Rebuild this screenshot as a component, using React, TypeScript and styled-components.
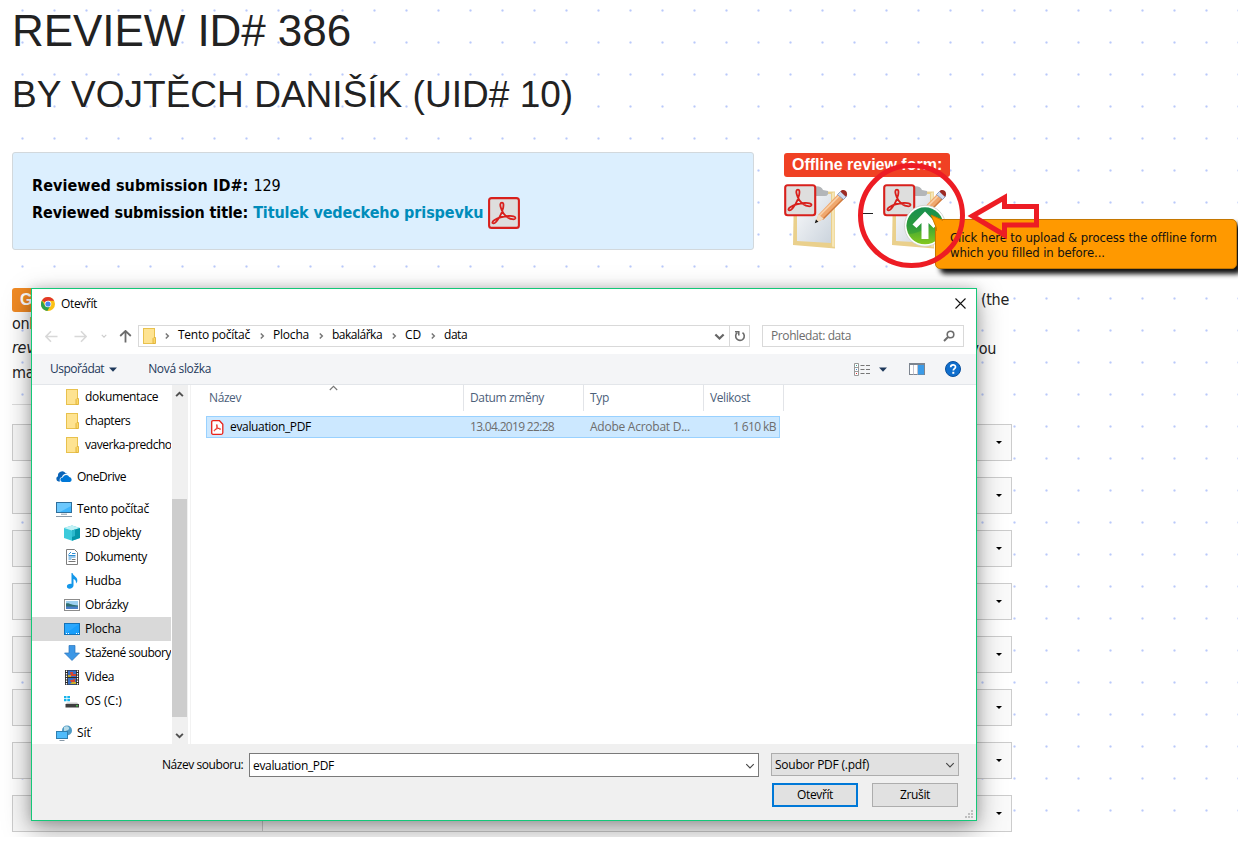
import React from "react";
import styled, { createGlobalStyle, css } from "styled-components";

const UI = '"Open Sans", "Noto Sans", sans-serif';
const BODY = '"DejaVu Sans Condensed", "DejaVu Sans", sans-serif';
const ARIAL = '"Liberation Sans", Arial, sans-serif';

const Global = createGlobalStyle`
  *, *::before, *::after { box-sizing: border-box; }
  body { margin: 0; background: #fff; overflow: hidden; }
  svg { display: block; flex: none; }
`;

/* ---------- review page ---------- */

const Page = styled.div`
  position: relative;
  width: 1238px;
  height: 837px;
  margin-bottom: 9px;
  padding: 0 0 0 12px;
  overflow: hidden;
  font-family: ${BODY};
  font-size: 16px;
  color: #222;
  background-color: #fff;
  background-image: radial-gradient(circle at 1.5px 1.5px, #b9c9fb 0, #cfdafc 0.9px, rgba(255, 255, 255, 0) 1.6px);
  background-size: 32px 32px;
  background-position: 21px 9px;
`;
const Title = styled.h1`
  margin: 0;
  padding-top: 6px;
  height: 61px;
  font: 400 44px/50px ${ARIAL};
  letter-spacing: -0.06px;
`;
const Subtitle = styled.h2`
  margin: 0;
  padding-top: 10px;
  height: 91px;
  font: 400 37px/48px ${ARIAL};
  letter-spacing: 0.02px;
`;
const Top = styled.div`
  display: flex;
  gap: 30px;
  height: 136px;
`;
const Info = styled.section`
  width: 742px;
  height: 98px;
  padding: 19px 19px;
  border: 1px solid #d2d8dc;
  border-radius: 3px;
  background: #dceffe;
  color: #000;
`;
const InfoLine = styled.div`
  display: flex;
  align-items: center;
  height: 27px;
  white-space: pre;
`;
const Strong = styled.b<{ $ls?: number }>`
  letter-spacing: ${(p) => p.$ls ?? 0}px;
`;
const Value = styled.span`
  margin-left: 5px;
  letter-spacing: -0.1px;
`;
const TitleLink = styled.b`
  margin: 0 5px 0 5px;
  color: #008cba;
  letter-spacing: -0.11px;
`;
const Forms = styled.section`
  padding-top: 1px;
`;
const Tag = styled.span<{ $color: string }>`
  display: block;
  width: max-content;
  height: 24px;
  padding: 0 8px;
  border-radius: 3px;
  background: ${(p) => p.$color};
  color: #fff;
  font: 700 16px/23px ${ARIAL};
  white-space: nowrap;
`;
const FormIcons = styled.div`
  display: flex;
  align-items: center;
  margin-top: 7px;
  height: 66px;
`;
const Dash = styled.i`
  width: 10px;
  height: 1px;
  margin: 0 10px 8px 15px;
  background: #222;
`;
const Guide = styled.div`
  display: grid;
  grid-template-columns: 60px auto;
  justify-content: space-between;
  width: 997px;
  height: 116px;
  line-height: 24.4px;
`;
const Rule = styled.div`
  width: 742px;
  height: 1px;
  background: #ddd;
`;
const GuideEnd = styled.div`
  text-align: right;
`;
const GuideLine = styled.div<{ $right?: number; $italic?: boolean }>`
  height: 24.4px;
  margin-right: ${(p) => p.$right ?? 0}px;
  font-style: ${(p) => (p.$italic ? "italic" : "normal")};
  letter-spacing: -0.3px;
`;
const Rows = styled.div`
  display: flex;
  flex-direction: column;
  gap: 16px;
  padding-top: 19px;
`;
const Criterion = styled.div`
  display: grid;
  grid-template-columns: 250px 1fr;
  width: 1000px;
  height: 37px;
  border: 1px solid #ccc;
  background: #fafafa;
`;
const CriterionName = styled.div`
  padding-right: 94px;
  border-right: 1px solid #ccc;
  background: #f7f7f7;
  text-align: right;
  font-weight: 700;
  line-height: 30px;
`;
const CriterionPick = styled.div`
  display: flex;
  align-items: center;
  justify-content: flex-end;
  padding-right: 9px;
`;
const PickArrow = styled.i`
  border: 3px solid transparent;
  border-top-color: #000;
  border-bottom: 0;
`;

/* ---------- tooltip and markings ---------- */

const Tooltip = styled.div`
  position: absolute;
  left: 935px;
  top: 219px;
  width: 302px;
  height: 50px;
  padding: 10px 14px;
  border: 1px solid #c57700;
  border-radius: 5px;
  background: #ff9900;
  box-shadow: 5px 5px 5px #111;
  color: #111;
  font: 13px/15px ${BODY};
  letter-spacing: -0.12px;
  white-space: pre;
`;
const TooltipTail = styled.svg`
  position: absolute;
  left: -6px;
  top: -6px;
`;
const Marks = styled.svg`
  position: absolute;
  left: 850px;
  top: 155px;
`;

/* ---------- file dialog ---------- */

const Dialog = styled.div`
  position: absolute;
  left: 31px;
  top: 288px;
  width: 946px;
  height: 533px;
  display: flex;
  flex-direction: column;
  border: 1px solid #14c878;
  background: #fff;
  box-shadow: 0 9px 26px rgba(0, 0, 0, 0.36), 0 0 10px rgba(0, 0, 0, 0.16);
  color: #000;
  font: 12px/16px ${UI};
  letter-spacing: -0.37px;
  white-space: nowrap;
`;
const T = styled.span<{ $ls?: number; $c?: string; $l?: number }>`
  ${(p) => p.$ls !== undefined && css`letter-spacing: ${p.$ls}px;`}
  ${(p) => p.$c && css`color: ${p.$c};`}
  margin-left: ${(p) => p.$l ?? 0}px;
  white-space: pre;
`;
const TitleBar = styled.div`
  display: flex;
  align-items: center;
  justify-content: space-between;
  height: 29px;
  padding: 0 10px 0 9px;
`;
const Group = styled.div<{ $gap?: number }>`
  display: flex;
  align-items: center;
  gap: ${(p) => p.$gap ?? 0}px;
`;
const NavBar = styled.div`
  display: flex;
  align-items: flex-start;
  height: 36px;
  padding: 7px 12px 0 13px;
`;
const Arrows = styled.div`
  display: flex;
  align-items: center;
  width: 93px;
  height: 22px;
`;
const Address = styled.div`
  display: flex;
  align-items: center;
  width: 612px;
  height: 22px;
  margin-right: 12px;
  border: 1px solid #d9d9d9;
  padding-left: 4px;
`;
const Crumb = styled.div<{ $w: number }>`
  display: flex;
  align-items: center;
  justify-content: space-between;
  width: ${(p) => p.$w}px;
  padding-right: 7px;
`;
const CrumbText = styled.div`
  height: 18px;
`;
const AddressEnd = styled.div`
  display: flex;
  align-items: center;
  height: 20px;
  margin-left: auto;
`;
const Refresh = styled.div`
  display: flex;
  align-items: center;
  justify-content: center;
  width: 20px;
  height: 20px;
  margin-left: 4px;
  border-left: 1px solid #d9d9d9;
`;
const Search = styled.div`
  display: flex;
  align-items: center;
  justify-content: space-between;
  width: 202px;
  height: 22px;
  padding: 0 8px 0 8px;
  border: 1px solid #d9d9d9;
`;
const ToolBar = styled.div`
  display: flex;
  align-items: center;
  justify-content: space-between;
  height: 31px;
  padding: 0 15px 0 18px;
  border-bottom: 1px solid #e3e6ea;
  background: #f4f5f7;
  color: #1e395b;
`;
const Body = styled.div`
  display: flex;
  height: 359px;
`;
const Tree = styled.div`
  width: 140px;
  overflow: hidden;
`;
const TreeItem = styled.div<{ $top?: boolean; $selected?: boolean; $gap?: boolean }>`
  display: flex;
  align-items: center;
  gap: 5px;
  width: 139px;
  height: 24px;
  margin-top: ${(p) => (p.$gap ? 8 : 0)}px;
  padding-left: ${(p) => (p.$top ? 24 : 32)}px;
  overflow: hidden;
  background: ${(p) => (p.$selected ? "#d9d9d9" : "transparent")};
`;
const ScrollBar = styled.div`
  display: flex;
  flex-direction: column;
  width: 16px;
  padding: 5px 0 4px;
  background: #f0f0f0;
`;
const ScrollArrow = styled.div`
  padding-left: 3px;
`;
const Thumb = styled.div`
  width: 15px;
  height: 218px;
  margin-top: 100px;
  margin-bottom: auto;
  background: #cdcdcd;
`;
const Files = styled.div`
  width: 593px;
  margin-left: 2px;
  border-left: 1px solid #f2f2f2;
`;
const Header = styled.div`
  position: relative;
  display: grid;
  grid-template-columns: 273px 120px 120px 80px;
  height: 26px;
  color: #4c607a;
`;
const HeaderCell = styled.div<{ $first?: boolean }>`
  padding: 5px 0 0 ${(p) => (p.$first ? 18 : 6)}px;
  border-right: 1px solid #e2e4e8;
`;
const SortMark = styled.svg`
  position: absolute;
  left: 138px;
  top: 0;
`;
const FileRow = styled.div`
  display: grid;
  grid-template-columns: 19px 240px 120px 120px 1fr;
  align-items: center;
  width: 574px;
  height: 22px;
  margin: 5px 0 0 15px;
  padding: 0 3px 0 4px;
  border: 1px solid #99d1ff;
  background: #cce8ff;
  color: #6d6d6d;
`;
const Size = styled.div`
  text-align: right;
  letter-spacing: -0.58px;
`;
const Footer = styled.div`
  position: relative;
  flex: 1;
  display: grid;
  grid-template-columns: 510px 188px;
  grid-template-rows: 24px 24px;
  column-gap: 12px;
  row-gap: 6px;
  padding: 9px 0 0 217px;
  background: #f0f0f0;
`;
const NameLabel = styled.div`
  position: absolute;
  left: 130px;
  top: 13px;
  letter-spacing: -0.44px;
`;
const Field = styled.div<{ $select?: boolean }>`
  display: flex;
  align-items: center;
  justify-content: space-between;
  height: ${(p) => (p.$select ? 23 : 24)}px;
  padding: ${(p) => (p.$select ? 0 : 1)}px 3px 0 3px;
  border: 1px solid ${(p) => (p.$select ? "#adadad" : "#7a7a7a")};
  background: ${(p) => (p.$select ? "#e1e1e1" : "#fff")};
`;
const Buttons = styled.div`
  grid-column: 2;
  display: flex;
  gap: 14px;
  padding-left: 1px;
`;
const Button = styled.div<{ $primary?: boolean }>`
  display: flex;
  align-items: center;
  justify-content: center;
  width: 86px;
  height: 24px;
  border: ${(p) => (p.$primary ? "2px solid #0078d7" : "1px solid #adadad")};
  background: #e1e1e1;
`;
const Grip = styled.svg`
  position: absolute;
  right: 3px;
  bottom: 2px;
`;

/* ---------- icons ---------- */

const Swoosh = ({ x = 0, y = 0 }: { x?: number; y?: number }) => (
  <g transform={`translate(${x} ${y})`} fill="none" stroke="#d8201c" strokeWidth="1.800" strokeLinejoin="round">
    <path d="M14 5.600c-2 0-2 2.400-1.200 5 1 3.600 3.600 7.800 7 10 2.600 1.700 7 2.400 7.600.7.500-1.700-3-2.500-6.600-2.300-5.600.3-11.400 2-14.600 4.200-2.200 1.500-2.300 3.400-.6 3.200 3.200-.5 8.500-9.600 9.600-15.800.5-2.900.4-5-1.200-5z" />
  </g>
);

const PdfIcon = () => (
  <svg width="32" height="32" viewBox="0 0 32 32">
    <rect x="1.100" y="1.100" width="29.800" height="29.800" rx="2.500" fill="#dededd" stroke="#d8201c" strokeWidth="2.100" />
    <Swoosh />
  </svg>
);

const FormIcon = ({ upload = false, id }: { upload?: boolean; id: string }) => (
  <svg width="64" height="66" viewBox="0 0 64 66">
    <defs>
      <linearGradient id={`${id}paper`} x1="0" y1="0" x2="1" y2="1">
        <stop offset="0" stopColor="#fbfbfc" /><stop offset="1" stopColor="#cbd4dd" />
      </linearGradient>
      <linearGradient id={`${id}green`} x1="0" y1="0" x2="0" y2="1">
        <stop offset="0" stopColor="#1c9156" /><stop offset=".5" stopColor="#3aa535" /><stop offset="1" stopColor="#86c81e" />
      </linearGradient>
    </defs>
    <path d="M10 8l41-.5v57L9 61z" fill="#ead08c" />
    <path d="M48 9l2.500-1v55l-2.500-.5z" fill="#f6e6b6" />
    <path d="M13 10h34v49l-34-2z" fill={`url(#${id}paper)`} />
    <path d="M28 3c6-2 10 0 11 3l5 1q1 5-3 5H28z" fill="#b3b6b9" />
    <path d="M31.500 38.500l3-8L55 9l6 5-21 21z" fill="#f0a86e" />
    <path d="M34.500 32.500L56.500 10.500" stroke="#f9d3ac" strokeWidth="1.600" />
    <path d="M38.500 35.500L60 14" stroke="#cf7a3e" strokeWidth="1.200" />
    <path d="M31.500 38.500l3-8 5.500 4.500z" fill="#f3dcc0" />
    <path d="M30.800 39.200l1.200-3.600 2.400 2.100z" fill="#111" />
    <path d="M53.500 10.500l3-3 6 5-3 3z" fill="#cfdcf0" stroke="#7e93bd" strokeWidth=".8" />
    <path d="M56.500 7.500c2-3 8-1 6.300 4.300l-1 1z" fill="#9c2b25" />
    <rect x="1.200" y="1.200" width="30" height="30" rx="2.500" fill="#dededd" stroke="#d8201c" strokeWidth="2.100" />
    <Swoosh />
    {upload && (
      <>
        <circle cx="42" cy="41.800" r="20.500" fill="#fff" stroke="#c9cdc9" strokeWidth=".8" />
        <circle cx="42" cy="41.800" r="18.500" fill={`url(#${id}green)`} />
        <path d="M23.500 42a18.500 18.500 0 0 1 36.500-3.500C50 37 38 50 26 50a18 18 0 0 1-2.500-8z" fill="#0d8a48" opacity=".35" />
        <path d="M42 27.500L54.500 40.500l-4 3.500-5-5v16h-7V39L33.500 44l-4-3.500z" fill="#fff" />
      </>
    )}
  </svg>
);

const Chrome = () => (
  <svg width="14" height="14" viewBox="0 0 14 14">
    <circle cx="7" cy="7" r="7" fill="#fbc116" />
    <path d="M7 7L.9 3.500A7 7 0 0 1 13.100 3.700H7z" fill="#e2382a" />
    <path d="M.9 3.500A7 7 0 0 0 6.300 14L9.500 8.500 7 10 4 8.500z" fill="#2da14c" />
    <circle cx="7" cy="7" r="3.300" fill="#fff" />
    <circle cx="7" cy="7" r="2.600" fill="#4a86ee" />
  </svg>
);

const Folder = () => (
  <svg width="13" height="16" viewBox="0 0 13 16">
    <rect x=".5" y=".5" width="11" height="15" fill="#fee391" stroke="#e8c14d" />
    <path d="M10 15.500v-5l1-1h1.500v6z" fill="#fdd866" stroke="#dfb23a" strokeWidth=".9" />
  </svg>
);

const Chevron = ({ dir = "right", color = "#666", s = 1.3, w = 8 }: { dir?: "right" | "down" | "up"; color?: string; s?: number; w?: number }) => (
  <svg width={w} height={w} viewBox="0 0 8 8">
    <path
      d={dir === "right" ? "M2.800 1.500L5.300 4 2.800 6.500" : dir === "down" ? "M1 2.500L4 5.500 7 2.500" : "M1 5.500L4 2.500 7 5.500"}
      fill="none" stroke={color} strokeWidth={s}
    />
  </svg>
);

const Arrow = ({ turn, color, s = 1.6 }: { turn: number; color: string; s?: number }) => (
  <svg width="13" height="13" viewBox="0 0 13 13">
    <path d="M12.500 6.500H1M6 1.200L.9 6.500 6 11.800" fill="none" stroke={color} strokeWidth={s} transform={`rotate(${turn} 6.500 6.500)`} />
  </svg>
);

const Caret = () => (
  <svg width="8" height="5" viewBox="0 0 8 5"><path d="M0 .5h8L4 4.800z" fill="#1e395b" /></svg>
);

const Icon = ({ children }: { children: React.ReactNode }) => (
  <svg width="16" height="16" viewBox="0 0 16 16">{children}</svg>
);

const icons = {
  folder: <Icon><g transform="translate(2 0)"><rect x=".5" y=".5" width="11" height="15" fill="#fee391" stroke="#e8c14d" /><path d="M10 15.500v-5l1-1h1.500v6z" fill="#fdd866" stroke="#dfb23a" strokeWidth=".9" /></g></Icon>,
  onedrive: <Icon><path d="M2.500 12.500A2.800 2.800 0 0 1 2 7.200 4.200 4.200 0 0 1 9.500 4a4 4 0 0 1 2 .6C8.500 4.500 6.500 6 6 8c-2 .3-3 2.500-2 4.500z" fill="#0a64b8" /><path d="M6.500 13a2.300 2.300 0 0 1 .3-4.600 3.500 3.500 0 0 1 6.500-.4A2.600 2.600 0 0 1 14 13z" fill="#0078d7" /></Icon>,
  pc: <Icon><rect x=".5" y="1.500" width="15" height="10" fill="#3fb4fb" stroke="#2f6f9c" /><path d="M1 2h14v3L4 11H1z" fill="#6cc8fd" /><path d="M5 13.200h6M0 15.500h16" stroke="#8a9aa8" strokeWidth="1" /></Icon>,
  cube: <Icon><path d="M0 3l8-2.500L16 3v10l-8 2.800L0 13z" fill="#3ccadb" /><path d="M0 3l8-2.500L16 3 8 5.500z" fill="#c2f1f5" /><path d="M8 5.500L16 3v10l-8 2.800z" fill="#0596a8" /><path d="M8 5.500l3-1V11l-3 1z" fill="#2bb9cc" /></Icon>,
  doc: <Icon><path d="M2.500.5h8l3 3v12h-11z" fill="#fff" stroke="#7e7e7e" /><path d="M4.500 5.500L7 3M4.500 8h7M4.500 10h3M8 4.500h3.500M4.500 6.500h7" stroke="#2e8fd5" /><path d="M8 10.500h3.500M4.500 12.500h7" stroke="#777" /></Icon>,
  music: <Icon><path d="M7.500 0h1c.5 3 5.500 4 4.800 8.300-.3 1.200-.8 1.700-1.300 2.200.3-3-1.200-4.200-2.500-4.500v6.500c0 2-2 3.200-4 3.200-1.600 0-2.600-.9-2.600-2.200 0-1.600 1.800-2.900 4.600-2.600z" fill="#1397ea" /></Icon>,
  picture: <Icon><rect x=".5" y="2.500" width="15" height="11" fill="#fff" stroke="#8c8c8c" /><rect x="2" y="4" width="12" height="8" fill="#9dd0f0" /><path d="M2 6.500c3-1 5 2 12 2V10H2z" fill="#2f6f70" /><path d="M2 9.500h12V12H2z" fill="#4a80c8" /></Icon>,
  desktop: <Icon><rect x=".5" y="2.500" width="15" height="11" fill="#189efb" stroke="#1372b8" /><path d="M1 13V3h14z" fill="#35adff" opacity=".6" /><path d="M2 12.500h1M4 12.500h1M12 12.500h1M14 12.500h1" stroke="#fff" /></Icon>,
  download: <Icon><path d="M5 .5h6V8h4.500L8 15.500.5 8H5z" fill="#3c97e6" stroke="#2a74ba" strokeWidth=".7" /></Icon>,
  video: <Icon><rect x="1" y="1" width="14" height="15" fill="#2b2b2b" /><rect x="4" y="1.500" width="8" height="6.500" fill="#3a70c6" /><rect x="4" y="9" width="8" height="6.500" fill="#3a70c6" /><path d="M6 3h3v2h3v2H7zM6 11h3v-1h2v3H7z" fill="#d8442e" /><path d="M4 6h3v2H4zM8 13h4v2H6z" fill="#c7b12c" /><path d="M2.500 1.500v14M13.500 1.500v14" stroke="#fff" strokeWidth="1.300" strokeDasharray="1.500 1" /></Icon>,
  drive: <Icon><path d="M0 3h2.500v2.200H0zM3.300 3H6v2.200H3.300zM0 6h2.500v2.200H0zM3.300 6H6v2.200H3.300z" fill="#17b4ec" /><path d="M3 9.500h10l2 2H1.500z" fill="#c9c9c9" /><rect x="1.500" y="11" width="13.500" height="3.500" fill="#3e3e3e" /><path d="M12 12.800h2" stroke="#4be04b" /></Icon>,
  network: <Icon><circle cx="11" cy="5.500" r="5" fill="#4f9ac4" /><path d="M8 2c3-2 6 0 5 2s-3 1-5 3z" fill="#b6dbe8" /><rect x=".5" y="6.500" width="11" height="7" fill="#4fbcfb" stroke="#2f7fb0" /><path d="M3.500 15.500h5" stroke="#8a9aa8" /></Icon>,
};

type TreeRow = { icon: keyof typeof icons; text: string; ls: number; top?: boolean; gap?: boolean; selected?: boolean };
const tree: TreeRow[] = [
  { icon: "folder", text: "dokumentace", ls: -0.33 },
  { icon: "folder", text: "chapters", ls: -0.45 },
  { icon: "folder", text: "vaverka-predcho", ls: -0.48 },
  { icon: "onedrive", text: "OneDrive", ls: -0.47, top: true, gap: true },
  { icon: "pc", text: "Tento počítač", ls: -0.26, top: true, gap: true },
  { icon: "cube", text: "3D objekty", ls: -0.36 },
  { icon: "doc", text: "Dokumenty", ls: -0.34 },
  { icon: "music", text: "Hudba", ls: -0.3 },
  { icon: "picture", text: "Obrázky", ls: -0.44 },
  { icon: "desktop", text: "Plocha", ls: -0.2, selected: true },
  { icon: "download", text: "Stažené soubory", ls: -0.45 },
  { icon: "video", text: "Videa", ls: -0.38 },
  { icon: "drive", text: "OS (C:)", ls: 0 },
  { icon: "network", text: "Síť", ls: 0, top: true, gap: true },
];

const crumbs: [string, number, number][] = [
  ["Tento počítač", 95, -0.26],
  ["Plocha", 59, -0.2],
  ["bakalářka", 73, -0.5],
  ["CD", 39, -0.13],
];

const FileDialog = () => (
  <Dialog>
    <TitleBar>
      <Group $gap={6}><Chrome /><T $ls={-0.36}>Otevřít</T></Group>
      <svg width="11" height="11" viewBox="0 0 11 11"><path d="M.5.5l10 10M10.500.5l-10 10" stroke="#111" strokeWidth="1.100" /></svg>
    </TitleBar>
    <NavBar>
      <Arrows>
        <Arrow turn={0} color="#d8d8d8" />
        <Group $gap={16}><T /><Arrow turn={180} color="#d8d8d8" /></Group>
        <Group $gap={14}><T /><Chevron dir="down" color="#ccc" w={6} s={1.5} /></Group>
        <Group $gap={12}><T /><Arrow turn={90} color="#6b6b6b" s={1.8} /></Group>
      </Arrows>
      <Address>
        <Folder />
        <Crumb $w={22}><T /><Chevron color="#777" s={1.5} /></Crumb>
        {crumbs.map(([t, w, ls]) => (
          <Crumb key={t} $w={w}>
            <CrumbText><T $ls={ls}>{t}</T></CrumbText>
            <Chevron color="#777" s={1.5} />
          </Crumb>
        ))}
        <CrumbText><T $ls={-0.45}>data</T></CrumbText>
        <AddressEnd>
          <Chevron dir="down" w={11} s={1.6} />
          <Refresh>
            <svg width="12" height="12" viewBox="0 0 12 12">
              <path d="M3.300 2.700A4.300 4.300 0 1 0 8.500 2.600" fill="none" stroke="#6b6b6b" strokeWidth="1.600" />
              <path d="M1 1.700h3.800v3.800" fill="none" stroke="#6b6b6b" strokeWidth="1.500" />
            </svg>
          </Refresh>
        </AddressEnd>
      </Address>
      <Search>
        <T $ls={-0.4} $c="#6d6d6d">Prohledat: data</T>
        <svg width="12" height="12" viewBox="0 0 12 12">
          <circle cx="7.500" cy="4.500" r="3.300" fill="none" stroke="#6d6d6d" strokeWidth="1.600" />
          <path d="M5 7L1 11" stroke="#6d6d6d" strokeWidth="1.900" />
        </svg>
      </Search>
    </NavBar>
    <ToolBar>
      <Group>
        <T $ls={-0.53}>Uspořádat</T>
        <T $l={5} />
        <Caret />
        <T $l={31} $ls={-0.33}>Nová složka</T>
      </Group>
      <Group>
        <svg width="17" height="13" viewBox="0 0 17 13">
          <path d="M.5.500h4v12h-4zM.5 4.500h4M.5 8.500h4" fill="#fff" stroke="#999" />
          <path d="M2 2.500h1" stroke="#3a9" strokeWidth="1.200" /><path d="M2 6.500h1" stroke="#48c" strokeWidth="1.200" /><path d="M2 10.500h1" stroke="#d33" strokeWidth="1.200" />
          <path d="M6.500 2.500h4M12 2.500h4M6.500 6.500h4M12 6.500h4M6.500 10.500h4M12 10.500h4" stroke="#777" />
        </svg>
        <T $l={8} /><Caret />
        <T $l={22} />
        <svg width="17" height="13" viewBox="0 0 17 13">
          <rect x=".5" y=".5" width="15" height="11" fill="#fff" stroke="#7d8590" />
          <path d="M0 1h16" stroke="#7d8590" strokeWidth="2" /><path d="M4.500 2v10M8.500 2v10" stroke="#aab" strokeWidth=".7" />
          <rect x="9" y="2" width="6" height="9.500" fill="#3b9be8" />
        </svg>
        <T $l={19} />
        <svg width="16" height="16" viewBox="0 0 16 16">
          <circle cx="8" cy="8" r="7.500" fill="#0f6ecd" stroke="#0a4f9c" />
          <path d="M5.700 6.200c0-3.200 4.800-3 4.800-.3 0 1.700-2.200 1.800-2.200 3.700" fill="none" stroke="#fff" strokeWidth="1.700" />
          <rect x="7.300" y="10.800" width="2" height="2" fill="#fff" />
        </svg>
      </Group>
    </ToolBar>
    <Body>
      <Tree>
        {tree.map((r) => (
          <TreeItem key={r.text} $top={r.top} $gap={r.gap} $selected={r.selected}>
            {icons[r.icon]}
            <T $ls={r.ls}>{r.text}</T>
          </TreeItem>
        ))}
      </Tree>
      <ScrollBar>
        <ScrollArrow><Chevron dir="up" color="#505050" w={9} s={1.7} /></ScrollArrow>
        <Thumb />
        <ScrollArrow><Chevron dir="down" color="#505050" w={9} s={1.7} /></ScrollArrow>
      </ScrollBar>
      <Files>
        <Header>
          <HeaderCell $first><T $ls={-0.41}>Název</T></HeaderCell>
          <HeaderCell><T $ls={-0.37}>Datum změny</T></HeaderCell>
          <HeaderCell><T $ls={-0.32}>Typ</T></HeaderCell>
          <HeaderCell><T $ls={-0.43}>Velikost</T></HeaderCell>
          <SortMark width="9" height="6" viewBox="0 0 9 6"><path d="M.8 5L4.500 1.300 8.200 5" fill="none" stroke="#777" strokeWidth="1.100" /></SortMark>
        </Header>
        <FileRow>
          <svg width="13" height="15" viewBox="0 0 13 15">
            <path d="M2 .7h6.500l3.300 3.500v8.600q0 1.500-1.500 1.500H2Q.7 14.300.7 12.800V2Q.7.7 2 .7z" fill="#fff" stroke="#e8221a" strokeWidth="1.300" />
            <path d="M6 4.500c-1.300.5.5 3.500 2.500 4.700 1.500.7 1.500-.7 0-.8-2 0-4.500.8-5.300 1.800-.5.900.6.900 1.300-.2C5.500 8.500 6.700 5.500 6 4.500z" fill="none" stroke="#e8221a" strokeWidth=".9" />
          </svg>
          <T $ls={-0.34} $c="#000">evaluation_PDF</T>
          <T $ls={-0.68}>13.04.2019 22:28</T>
          <T $ls={-0.25}>Adobe Acrobat D...</T>
          <Size>1 610 kB</Size>
        </FileRow>
      </Files>
    </Body>
    <Footer>
      <NameLabel>Název souboru:</NameLabel>
      <Field><T $ls={-0.34}>evaluation_PDF</T><Chevron dir="down" color="#444" w={10} s={0.9} /></Field>
      <Field $select><T $ls={-0.23}>Soubor PDF (.pdf)</T><Chevron dir="down" color="#444" w={10} s={0.9} /></Field>
      <Buttons>
        <Button $primary>Otevřít</Button>
        <Button>Zrušit</Button>
      </Buttons>
      <Grip width="8" height="8" viewBox="0 0 8 8"><path d="M6 0h2v2H6zM3 3h2v2H3zM6 3h2v2H6zM0 6h2v2H0zM3 6h2v2H3zM6 6h2v2H6z" fill="#bfbfbf" /></Grip>
    </Footer>
  </Dialog>
);

export default function App() {
  return (
    <>
      <Global />
      <Page>
        <Title>REVIEW ID# 386</Title>
        <Subtitle>BY VOJTĚCH DANIŠÍK (UID# 10)</Subtitle>
        <Top>
          <Info>
            <InfoLine><Strong $ls={0.07}>Reviewed submission ID#:</Strong><Value>129</Value></InfoLine>
            <InfoLine>
              <Strong $ls={-0.1}>Reviewed submission title:</Strong>
              <TitleLink>Titulek vedeckeho prispevku</TitleLink>
              <PdfIcon />
            </InfoLine>
          </Info>
          <Forms>
            <Tag $color="#f04124">Offline review form:</Tag>
            <FormIcons><FormIcon id="a" /><Dash /><FormIcon id="b" upload /></FormIcons>
          </Forms>
        </Top>
        <Guide>
          <div>
            <Tag $color="#f08a24">Guide</Tag>
            <GuideLine>only</GuideLine>
            <GuideLine $italic>review</GuideLine>
            <GuideLine>may</GuideLine>
          </div>
          <GuideEnd>
            <GuideLine>(the</GuideLine>
            <GuideLine />
            <GuideLine $right={13}>you</GuideLine>
          </GuideEnd>
        </Guide>
        <Rule />
        <Rows>
          {[0, 1, 2, 3, 4, 5, 6, 7].map((n) => (
            <Criterion key={n}>
              <CriterionName>{n === 7 ? "p" : ""}</CriterionName>
              <CriterionPick><PickArrow /></CriterionPick>
            </Criterion>
          ))}
        </Rows>
        <FileDialog />
        <Tooltip>
          <TooltipTail width="18" height="20" viewBox="0 0 18 20">
            <path d="M6 20V14L1 1l12 5h5v2H8v12z" fill="#f90" />
            <path d="M6.500 17v-3L1 1l12 5.500" fill="none" stroke="#c57700" strokeWidth=".9" />
          </TooltipTail>
          {"Click here to upload & process the offline form\nwhich you filled in before..."}
        </Tooltip>
        <Marks width="200" height="120" viewBox="850 155 200 120" fill="none" stroke="#ed1c24" strokeWidth="5">
          <ellipse cx="911.500" cy="215.500" rx="51" ry="50" />
          <path d="M972.500 216L1004.500 197.500V206.500H1036.500V225H1004.500V235z" />
        </Marks>
      </Page>
    </>
  );
}
